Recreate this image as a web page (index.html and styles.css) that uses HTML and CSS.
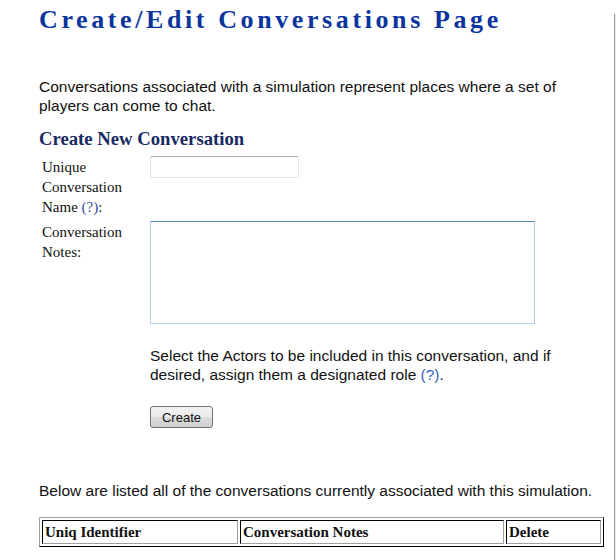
FILE: index.html
```html
<!DOCTYPE html>
<html>
<head>
<meta charset="utf-8">
<title>Create/Edit Conversations Page</title>
<link rel="stylesheet" href="styles.css">
</head>
<body>
<div class="page">
  <h1 class="title">Create/Edit Conversations Page</h1>
  <p class="intro">Conversations associated with a simulation represent places where a set of players can come to chat.</p>
  <h2 class="subtitle">Create New Conversation</h2>
  <form class="form">
    <div class="label">Unique Conversation Name <a class="help" href="#">(?)</a>:</div>
    <div class="field"><input class="text-input" type="text"></div>
    <div class="label">Conversation Notes:</div>
    <div class="field"><textarea class="notes"></textarea></div>
    <div class="spacer"></div>
    <div class="field">
      <p class="actors">Select the Actors to be included in this conversation, and if desired, assign them a designated role <a class="help-sans" href="#">(?)</a>.</p>
      <button class="btn" type="button">Create</button>
    </div>
  </form>
  <p class="listing">Below are listed all of the conversations currently associated with this simulation.</p>
  <table class="conv-table">
    <colgroup>
      <col class="c1">
      <col class="c2">
      <col class="c3">
    </colgroup>
    <tr>
      <th>Uniq Identifier</th>
      <th>Conversation Notes</th>
      <th>Delete</th>
    </tr>
  </table>
</div>
<div class="edge"></div>
</body>
</html>
```
FILE: styles.css
```css
html, body {
  margin: 0;
  padding: 0;
  background: #ffffff;
}

.page {
  width: 565px;
  padding-left: 39px;
  font-family: "Liberation Sans", Arial, sans-serif;
  font-size: 15.5px;
  color: #111111;
}

.title {
  margin: 0;
  padding-top: 5px;
  height: 30px;
  line-height: 30px;
  font-family: "Liberation Serif", "Times New Roman", serif;
  font-weight: bold;
  font-size: 26px;
  letter-spacing: 3.6px;
  color: #0a359e;
  white-space: nowrap;
}

.intro {
  margin: 42px 0 0 0;
  line-height: 19px;
}

.subtitle {
  margin: 13px 0 0 0;
  line-height: 22px;
  font-family: "Liberation Serif", "Times New Roman", serif;
  font-weight: bold;
  font-size: 18.7px;
  color: #172a63;
}

.form {
  margin: 6px 0 0 0;
  display: grid;
  grid-template-columns: 96px 1fr;
  column-gap: 12px;
  row-gap: 3px;
  padding-left: 3px;
}

.label {
  padding: 1px 0;
  font-family: "Liberation Serif", "Times New Roman", serif;
  font-size: 15px;
  line-height: 20px;
  color: #111111;
}

.help {
  color: #2e4fa6;
  text-decoration: none;
}

.help-sans {
  color: #2f62c4;
  text-decoration: none;
}

.field {
  display: flex;
  flex-direction: column;
  align-items: flex-start;
}

.text-input {
  box-sizing: border-box;
  width: 149px;
  height: 22px;
  margin: 0;
  padding: 1px 2px;
  border: 1px solid #e3e9ef;
  border-top-color: #abadb3;
  border-left-color: #dbdfe6;
  border-radius: 2px;
  background: #ffffff;
}

.notes {
  box-sizing: border-box;
  width: 385px;
  height: 103px;
  margin: 0;
  padding: 2px;
  border: 1px solid #b5cfe7;
  border-top-color: #5b87b2;
  border-radius: 0;
  resize: none;
  background: #ffffff;
}

.actors {
  margin: 19px 0 0 0;
  line-height: 19px;
}

.btn {
  box-sizing: border-box;
  margin-top: 22px;
  width: 63px;
  height: 22px;
  padding: 0;
  border: 1px solid #707070;
  border-radius: 3px;
  background: linear-gradient(to bottom, #f2f2f2 0%, #ebebeb 50%, #dddddd 51%, #cfcfcf 100%);
  font-family: "Liberation Sans", Arial, sans-serif;
  font-size: 13px;
  color: #111111;
}

.listing {
  margin: 53px 0 0 0;
  line-height: 19px;
}

.conv-table {
  margin-top: 17px;
  width: 565px;
  table-layout: fixed;
  border-collapse: separate;
  border-spacing: 2px;
  border: 1px solid;
  border-color: #a0a0a0 #000000 #000000 #a0a0a0;
}

.c1 { width: 196px; }
.c3 { width: 95px; }

.conv-table th {
  box-sizing: border-box;
  height: 24px;
  padding: 2px 2px;
  border: 1px solid;
  border-color: #000000 #a0a0a0 #a0a0a0 #000000;
  text-align: left;
  font-family: "Liberation Serif", "Times New Roman", serif;
  font-size: 15px;
  font-weight: bold;
  color: #111111;
  line-height: 18px;
}

.edge {
  position: fixed;
  top: 14px;
  right: 0;
  bottom: 0;
  width: 1px;
  border-left: 1px solid #9a9a9a;
  background: #ececec;
}
```
